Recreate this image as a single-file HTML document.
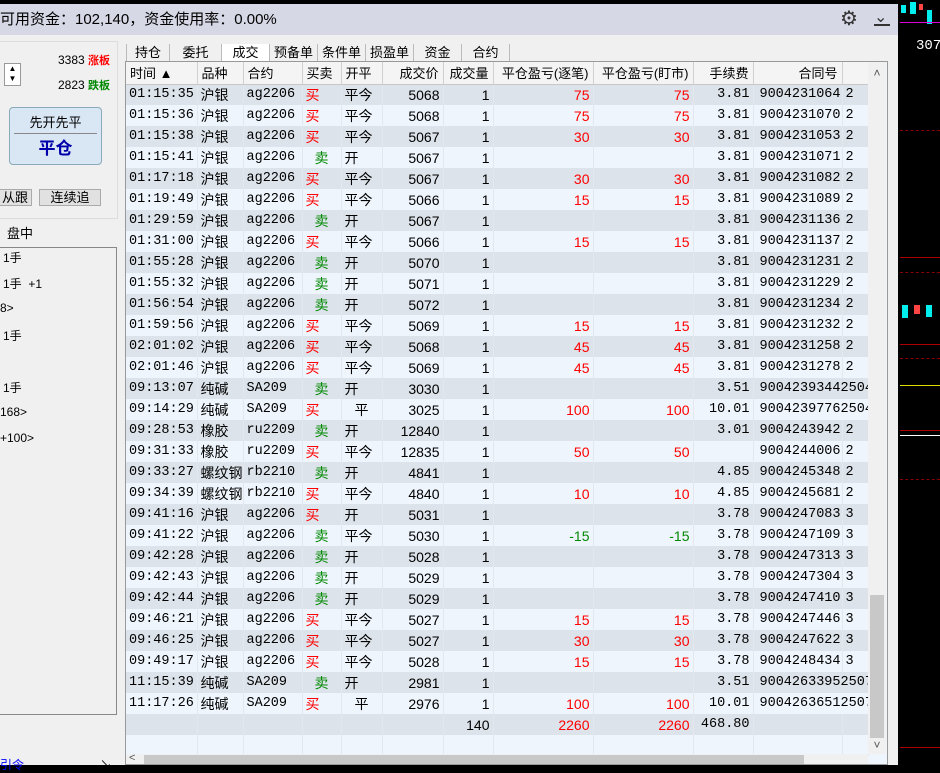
<!DOCTYPE html>
<html><head><meta charset="utf-8"><style>
*{margin:0;padding:0;box-sizing:border-box}
body{width:940px;height:765px;overflow:hidden;background:#000;font-family:"Liberation Sans","Noto Sans CJK SC",sans-serif;position:relative;font-size:13px;color:#000}
.abs{position:absolute}
#dlg{left:0;top:4px;width:898px;height:761px;background:#f0f0f0}
#title{left:0;top:0;width:898px;height:31px;background:#d6d8e6;font-size:15px;line-height:31px;padding-left:0}
table{border-collapse:collapse;table-layout:fixed}
td{height:21px;padding:0 3px;white-space:nowrap;overflow:hidden;border-right:1px solid #e4e8ee;font-size:14px}
tr.d td{background:#dce3ea}
tr.l td{background:#eef5fc}
.m{font-family:"Liberation Mono","Noto Sans CJK SC",monospace;font-size:13.5px}
.r{text-align:right}
td.id{padding:0 1px 0 2px}
.red{color:#f00}.grn{color:#080}
th{height:22px;font-weight:normal;font-size:13px;background:#f4f4f4;border-right:1px solid #d0d0d0;border-bottom:1px solid #c8c8c8;padding:0 4px;text-align:left}
.tab{position:absolute;top:40px;height:18px;font-size:13px;line-height:18px;text-align:center;border-right:1px solid #bbb}
</style></head><body>
<div class="abs" style="left:900px;top:0;width:40px;height:765px;background:#000">
<div class="abs" style="left:0;top:130px;width:40px;border-top:1px dashed #800"></div>
<div class="abs" style="left:0;top:257px;width:40px;border-top:1px solid #a00"></div>
<div class="abs" style="left:0;top:272px;width:40px;border-top:1px dashed #800"></div>
<div class="abs" style="left:0;top:344px;width:40px;border-top:1px solid #a00"></div>
<div class="abs" style="left:0;top:358px;width:40px;border-top:1px dashed #800"></div>
<div class="abs" style="left:0;top:430px;width:40px;border-top:1px solid #a00"></div>
<div class="abs" style="left:0;top:479px;width:40px;border-top:1px dashed #800"></div>
<div class="abs" style="left:0;top:747px;width:40px;border-top:1px solid #a00"></div>
<div class="abs" style="left:1px;top:5px;width:5px;height:8px;background:#0ee"></div>
<div class="abs" style="left:10px;top:2px;width:6px;height:12px;background:#0ee"></div>
<div class="abs" style="left:19px;top:4px;width:4px;height:6px;background:#f44"></div>
<div class="abs" style="left:27px;top:10px;width:5px;height:14px;background:#0ee"></div>
<div class="abs" style="left:0;top:22px;width:40px;border-top:1px solid #d0d"></div>
<div class="abs" style="left:2px;top:305px;width:6px;height:13px;background:#0ee"></div>
<div class="abs" style="left:14px;top:305px;width:6px;height:9px;background:#f44"></div>
<div class="abs" style="left:26px;top:305px;width:6px;height:12px;background:#0ee"></div>
<div class="abs" style="left:16px;top:38px;color:#fff;font-size:14px;font-family:'Liberation Mono',monospace">307</div>
<div class="abs" style="left:0;top:385px;width:40px;border-top:1px solid #dd0"></div>
<div class="abs" style="left:0;top:435px;width:40px;border-top:1px solid #fff"></div>
</div>
<div id="dlg" class="abs">
<div id="title" class="abs">可用资金：102,140，资金使用率：0.00%
<span class="abs" style="left:840px;top:0;font-size:20px;color:#333">⚙</span>
<span class="abs" style="left:874px;top:-2px;font-size:16px;color:#333">⌄</span>
<div class="abs" style="left:874px;top:20px;width:16px;border-top:2px solid #333"></div>
</div>
<!-- left panel -->
<div class="abs" style="left:0;top:37px;width:118px;height:178px;border:1px solid #ddd;border-left:none"></div>
<div class="abs" style="left:58px;top:48px;font-size:12px">3383 <b style="color:#f00;font-size:11px">涨板</b></div>
<div class="abs" style="left:58px;top:73px;font-size:12px">2823 <b style="color:#080;font-size:11px">跌板</b></div>
<div class="abs" style="left:4px;top:59px;width:17px;height:23px;border:1px solid #999;background:#fff;font-size:8px;line-height:10px;text-align:center">▲<br>▼</div>
<div class="abs" style="left:9px;top:103px;width:93px;height:58px;border:1px solid #8ab;border-radius:4px;background:#d9e6f4">
<div style="text-align:center;font-size:13px;margin-top:4px">先开先平</div>
<div style="margin:2px 4px 0;border-top:1px solid #888"></div>
<div style="text-align:center;font-size:17px;color:#00a;font-weight:bold">平仓</div></div>
<div class="abs" style="left:-10px;top:185px;width:42px;height:17px;border:1px solid #aaa;background:#e1e1e1;font-size:13px;line-height:15px;text-align:right;padding-right:3px">从跟</div>
<div class="abs" style="left:39px;top:185px;width:62px;height:17px;border:1px solid #aaa;background:#e1e1e1;font-size:13px;line-height:15px;text-align:center">连续追</div>
<div class="abs" style="left:7px;top:219px;font-size:13px">盘中</div>
<div class="abs" style="left:0;top:243px;width:117px;height:468px;border:1px solid #888;border-left:none"></div>
<div class="abs" style="left:3px;top:245px;font-size:12px">1手</div>
<div class="abs" style="left:3px;top:271px;font-size:12px">1手 &nbsp;+1</div>
<div class="abs" style="left:0;top:297px;font-size:12px">8&gt;</div>
<div class="abs" style="left:3px;top:323px;font-size:12px">1手</div>
<div class="abs" style="left:3px;top:375px;font-size:12px">1手</div>
<div class="abs" style="left:0;top:401px;font-size:12px">168&gt;</div>
<div class="abs" style="left:0;top:427px;font-size:12px">+100&gt;</div>
<div class="abs" style="left:0;top:752px;font-size:12px;color:#00f">引令</div>
<div class="abs" style="left:100px;top:752px;font-size:12px">↘</div>
<!-- tabs -->
<div class="tab" style="left:126px;width:44px;border-left:1px solid #bbb">持仓</div>
<div class="tab" style="left:170px;width:52px">委托</div>
<div class="tab" style="left:222px;width:48px;background:#fff;height:19px">成交</div>
<div class="tab" style="left:270px;width:48px">预备单</div>
<div class="tab" style="left:318px;width:48px">条件单</div>
<div class="tab" style="left:366px;width:48px">损盈单</div>
<div class="tab" style="left:414px;width:48px">资金</div>
<div class="tab" style="left:462px;width:48px">合约</div>
<!-- grid -->
<div class="abs" style="left:125px;top:57px;width:763px;height:704px;border:1px solid #999;background:#eef5fc;overflow:hidden">
<table style="width:742px">
<colgroup><col style="width:71px"><col style="width:46px"><col style="width:59px"><col style="width:39px"><col style="width:41px"><col style="width:61px"><col style="width:50px"><col style="width:100px"><col style="width:100px"><col style="width:60px"><col style="width:89px"><col style="width:26px"></colgroup>
<tr><th>时间 ▲</th><th>品种</th><th>合约</th><th>买卖</th><th>开平</th><th style="text-align:right">成交价</th><th style="text-align:right">成交量</th><th style="text-align:right">平仓盈亏(逐笔)</th><th style="text-align:right">平仓盈亏(盯市)</th><th style="text-align:right">手续费</th><th style="text-align:right">合同号</th><th></th></tr>
<tr class="d"><td class="m">01:15:35</td><td>沪银</td><td class="m">ag2206</td><td class="red">买</td><td>平今</td><td class="r">5068</td><td class="r">1</td><td class="r red">75</td><td class="r red">75</td><td class="r m">3.81</td><td class="r m id">9004231064</td><td class="m">2</td></tr>
<tr class="l"><td class="m">01:15:36</td><td>沪银</td><td class="m">ag2206</td><td class="red">买</td><td>平今</td><td class="r">5068</td><td class="r">1</td><td class="r red">75</td><td class="r red">75</td><td class="r m">3.81</td><td class="r m id">9004231070</td><td class="m">2</td></tr>
<tr class="d"><td class="m">01:15:38</td><td>沪银</td><td class="m">ag2206</td><td class="red">买</td><td>平今</td><td class="r">5067</td><td class="r">1</td><td class="r red">30</td><td class="r red">30</td><td class="r m">3.81</td><td class="r m id">9004231053</td><td class="m">2</td></tr>
<tr class="l"><td class="m">01:15:41</td><td>沪银</td><td class="m">ag2206</td><td class="grn" style="text-align:center">卖</td><td>开</td><td class="r">5067</td><td class="r">1</td><td></td><td></td><td class="r m">3.81</td><td class="r m id">9004231071</td><td class="m">2</td></tr>
<tr class="d"><td class="m">01:17:18</td><td>沪银</td><td class="m">ag2206</td><td class="red">买</td><td>平今</td><td class="r">5067</td><td class="r">1</td><td class="r red">30</td><td class="r red">30</td><td class="r m">3.81</td><td class="r m id">9004231082</td><td class="m">2</td></tr>
<tr class="l"><td class="m">01:19:49</td><td>沪银</td><td class="m">ag2206</td><td class="red">买</td><td>平今</td><td class="r">5066</td><td class="r">1</td><td class="r red">15</td><td class="r red">15</td><td class="r m">3.81</td><td class="r m id">9004231089</td><td class="m">2</td></tr>
<tr class="d"><td class="m">01:29:59</td><td>沪银</td><td class="m">ag2206</td><td class="grn" style="text-align:center">卖</td><td>开</td><td class="r">5067</td><td class="r">1</td><td></td><td></td><td class="r m">3.81</td><td class="r m id">9004231136</td><td class="m">2</td></tr>
<tr class="l"><td class="m">01:31:00</td><td>沪银</td><td class="m">ag2206</td><td class="red">买</td><td>平今</td><td class="r">5066</td><td class="r">1</td><td class="r red">15</td><td class="r red">15</td><td class="r m">3.81</td><td class="r m id">9004231137</td><td class="m">2</td></tr>
<tr class="d"><td class="m">01:55:28</td><td>沪银</td><td class="m">ag2206</td><td class="grn" style="text-align:center">卖</td><td>开</td><td class="r">5070</td><td class="r">1</td><td></td><td></td><td class="r m">3.81</td><td class="r m id">9004231231</td><td class="m">2</td></tr>
<tr class="l"><td class="m">01:55:32</td><td>沪银</td><td class="m">ag2206</td><td class="grn" style="text-align:center">卖</td><td>开</td><td class="r">5071</td><td class="r">1</td><td></td><td></td><td class="r m">3.81</td><td class="r m id">9004231229</td><td class="m">2</td></tr>
<tr class="d"><td class="m">01:56:54</td><td>沪银</td><td class="m">ag2206</td><td class="grn" style="text-align:center">卖</td><td>开</td><td class="r">5072</td><td class="r">1</td><td></td><td></td><td class="r m">3.81</td><td class="r m id">9004231234</td><td class="m">2</td></tr>
<tr class="l"><td class="m">01:59:56</td><td>沪银</td><td class="m">ag2206</td><td class="red">买</td><td>平今</td><td class="r">5069</td><td class="r">1</td><td class="r red">15</td><td class="r red">15</td><td class="r m">3.81</td><td class="r m id">9004231232</td><td class="m">2</td></tr>
<tr class="d"><td class="m">02:01:02</td><td>沪银</td><td class="m">ag2206</td><td class="red">买</td><td>平今</td><td class="r">5068</td><td class="r">1</td><td class="r red">45</td><td class="r red">45</td><td class="r m">3.81</td><td class="r m id">9004231258</td><td class="m">2</td></tr>
<tr class="l"><td class="m">02:01:46</td><td>沪银</td><td class="m">ag2206</td><td class="red">买</td><td>平今</td><td class="r">5069</td><td class="r">1</td><td class="r red">45</td><td class="r red">45</td><td class="r m">3.81</td><td class="r m id">9004231278</td><td class="m">2</td></tr>
<tr class="d"><td class="m">09:13:07</td><td>纯碱</td><td class="m">SA209</td><td class="grn" style="text-align:center">卖</td><td>开</td><td class="r">3030</td><td class="r">1</td><td></td><td></td><td class="r m">3.51</td><td class="m id" colspan="2" style="padding-left:6px">90042393442504</td></tr>
<tr class="l"><td class="m">09:14:29</td><td>纯碱</td><td class="m">SA209</td><td class="red">买</td><td style="text-align:center">平</td><td class="r">3025</td><td class="r">1</td><td class="r red">100</td><td class="r red">100</td><td class="r m">10.01</td><td class="m id" colspan="2" style="padding-left:6px">90042397762504</td></tr>
<tr class="d"><td class="m">09:28:53</td><td>橡胶</td><td class="m">ru2209</td><td class="grn" style="text-align:center">卖</td><td>开</td><td class="r">12840</td><td class="r">1</td><td></td><td></td><td class="r m">3.01</td><td class="r m id">9004243942</td><td class="m">2</td></tr>
<tr class="l"><td class="m">09:31:33</td><td>橡胶</td><td class="m">ru2209</td><td class="red">买</td><td>平今</td><td class="r">12835</td><td class="r">1</td><td class="r red">50</td><td class="r red">50</td><td></td><td class="r m id">9004244006</td><td class="m">2</td></tr>
<tr class="d"><td class="m">09:33:27</td><td>螺纹钢</td><td class="m">rb2210</td><td class="grn" style="text-align:center">卖</td><td>开</td><td class="r">4841</td><td class="r">1</td><td></td><td></td><td class="r m">4.85</td><td class="r m id">9004245348</td><td class="m">2</td></tr>
<tr class="l"><td class="m">09:34:39</td><td>螺纹钢</td><td class="m">rb2210</td><td class="red">买</td><td>平今</td><td class="r">4840</td><td class="r">1</td><td class="r red">10</td><td class="r red">10</td><td class="r m">4.85</td><td class="r m id">9004245681</td><td class="m">2</td></tr>
<tr class="d"><td class="m">09:41:16</td><td>沪银</td><td class="m">ag2206</td><td class="red">买</td><td>开</td><td class="r">5031</td><td class="r">1</td><td></td><td></td><td class="r m">3.78</td><td class="r m id">9004247083</td><td class="m">3</td></tr>
<tr class="l"><td class="m">09:41:22</td><td>沪银</td><td class="m">ag2206</td><td class="grn" style="text-align:center">卖</td><td>平今</td><td class="r">5030</td><td class="r">1</td><td class="r grn">-15</td><td class="r grn">-15</td><td class="r m">3.78</td><td class="r m id">9004247109</td><td class="m">3</td></tr>
<tr class="d"><td class="m">09:42:28</td><td>沪银</td><td class="m">ag2206</td><td class="grn" style="text-align:center">卖</td><td>开</td><td class="r">5028</td><td class="r">1</td><td></td><td></td><td class="r m">3.78</td><td class="r m id">9004247313</td><td class="m">3</td></tr>
<tr class="l"><td class="m">09:42:43</td><td>沪银</td><td class="m">ag2206</td><td class="grn" style="text-align:center">卖</td><td>开</td><td class="r">5029</td><td class="r">1</td><td></td><td></td><td class="r m">3.78</td><td class="r m id">9004247304</td><td class="m">3</td></tr>
<tr class="d"><td class="m">09:42:44</td><td>沪银</td><td class="m">ag2206</td><td class="grn" style="text-align:center">卖</td><td>开</td><td class="r">5029</td><td class="r">1</td><td></td><td></td><td class="r m">3.78</td><td class="r m id">9004247410</td><td class="m">3</td></tr>
<tr class="l"><td class="m">09:46:21</td><td>沪银</td><td class="m">ag2206</td><td class="red">买</td><td>平今</td><td class="r">5027</td><td class="r">1</td><td class="r red">15</td><td class="r red">15</td><td class="r m">3.78</td><td class="r m id">9004247446</td><td class="m">3</td></tr>
<tr class="d"><td class="m">09:46:25</td><td>沪银</td><td class="m">ag2206</td><td class="red">买</td><td>平今</td><td class="r">5027</td><td class="r">1</td><td class="r red">30</td><td class="r red">30</td><td class="r m">3.78</td><td class="r m id">9004247622</td><td class="m">3</td></tr>
<tr class="l"><td class="m">09:49:17</td><td>沪银</td><td class="m">ag2206</td><td class="red">买</td><td>平今</td><td class="r">5028</td><td class="r">1</td><td class="r red">15</td><td class="r red">15</td><td class="r m">3.78</td><td class="r m id">9004248434</td><td class="m">3</td></tr>
<tr class="d"><td class="m">11:15:39</td><td>纯碱</td><td class="m">SA209</td><td class="grn" style="text-align:center">卖</td><td>开</td><td class="r">2981</td><td class="r">1</td><td></td><td></td><td class="r m">3.51</td><td class="m id" colspan="2" style="padding-left:6px">90042633952507</td></tr>
<tr class="l"><td class="m">11:17:26</td><td>纯碱</td><td class="m">SA209</td><td class="red">买</td><td style="text-align:center">平</td><td class="r">2976</td><td class="r">1</td><td class="r red">100</td><td class="r red">100</td><td class="r m">10.01</td><td class="m id" colspan="2" style="padding-left:6px">90042636512507</td></tr>
<tr class="d"><td></td><td></td><td></td><td></td><td></td><td></td><td class="r">140</td><td class="r red">2260</td><td class="r red">2260</td><td class="r m">468.80</td><td></td><td></td></tr>
<tr class="l"><td></td><td></td><td></td><td></td><td></td><td></td><td></td><td></td><td></td><td></td><td></td><td></td></tr>
</table>
<div class="abs" style="left:742px;top:0;width:18px;height:692px;background:#f0f0f0">
<div style="text-align:center;font-size:12px;color:#555;margin-top:4px">˄</div>
<div class="abs" style="left:2px;top:533px;width:14px;height:143px;background:#c8c8c8"></div>
<div class="abs" style="left:0;top:676px;width:18px;text-align:center;font-size:12px;color:#555">˅</div>
</div>
<div class="abs" style="left:0;top:692px;width:742px;height:12px;background:#f0f0f0">
<div class="abs" style="left:18px;top:1px;width:660px;height:11px;background:#c8c8c8"></div>
<div class="abs" style="left:3px;top:-2px;font-size:11px;color:#555">&lt;</div>
</div>
</div>
</div>
</body></html>
